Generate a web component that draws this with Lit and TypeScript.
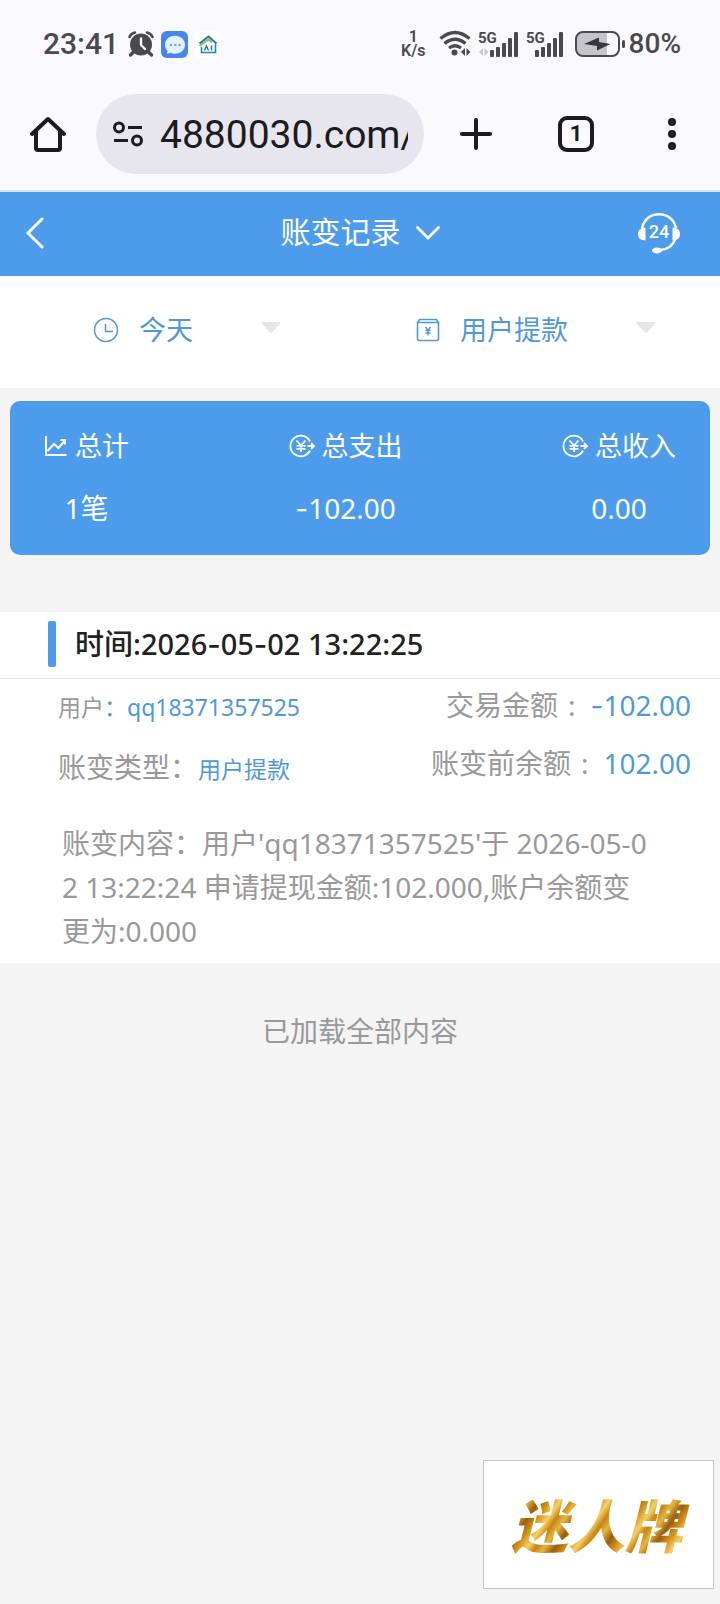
import { LitElement, html, css, svg } from "lit";
import { customElement } from "lit/decorators.js";

const base = css`
  :host {
    display: block;
  }
  * {
    box-sizing: border-box;
  }
  button,
  input,
  select {
    font: inherit;
    color: inherit;
    background: none;
    border: 0;
    margin: 0;
    padding: 0;
    outline: 0;
    appearance: none;
  }
  svg {
    display: block;
    flex: none;
    overflow: visible;
  }
  .dash {
    font-family: Inter, sans-serif;
    line-height: 1;
  }
`;

/* Figures use a wider dash than the text face offers. */
const dashed = (text: string) =>
  text.split(/(-)/).map((part) => (part === "-" ? html`<span class="dash">-</span>` : part));

@customElement("status-bar")
class StatusBar extends LitElement {
  static styles = [
    base,
    css`
      .bar {
        display: flex;
        align-items: center;
        justify-content: space-between;
        height: 88px;
        padding: 0 39px 0 43px;
        color: #4a494e;
        font-weight: 500;
      }
      .side {
        display: flex;
        align-items: center;
        gap: 7px;
      }
      .time {
        font-size: 30px;
        line-height: 32px;
        margin-right: 2px;
      }
      .speed {
        display: flex;
        flex-direction: column;
        align-items: center;
        font-size: 16px;
        line-height: 14px;
        font-weight: 600;
        margin-right: 6px;
      }
      .battery {
        display: flex;
        align-items: center;
        gap: 4px;
        font-size: 28px;
        line-height: 32px;
        margin-left: 4px;
      }
      .net {
        font-size: 15px;
        font-weight: 700;
        fill: #4a494e;
      }
    `,
  ];

  private bars(x: number) {
    return [7, 10, 14, 19, 25].map(
      (h, i) => svg`<rect x=${x + i * 6} y=${26 - h} width="4" height=${h} rx="1" fill="#4a494e" />`,
    );
  }

  render() {
    return html`
      <div class="bar">
        <div class="side">
          <span class="time">23:41</span>
          <svg width="26" height="26" viewBox="0 0 26 26" fill="none" stroke="#4a494e">
            <circle cx="13" cy="13.500" r="11" fill="#4a494e" stroke="none" />
            <path d="M1.500 6A8 8 0 0 1 7 1.500M19 1.500A8 8 0 0 1 24.500 6" stroke-width="2.600" stroke-linecap="round" />
            <path d="M5.500 21l-3 3M20.500 21l3 3" stroke-width="3.400" stroke-linecap="round" />
            <path d="M13 7.500v6.500l4 4" stroke="#faf9ff" stroke-width="2.400" stroke-linecap="round" />
          </svg>
          <svg width="27" height="27" viewBox="0 0 27 27">
            <rect width="27" height="27" rx="6" fill="#4885ea" />
            <path d="M14 4.800c5.800 0 10 3.900 10 8.900s-4.200 9-10 9c-1.700 0-3.200-.3-4.500-.9L5.800 23l.8-3C5 18.400 4 16.200 4 13.700c0-5 4.200-8.900 10-8.900z" fill="#e2f3fd" />
            <g fill="#86a8d8"><circle cx="10" cy="14" r="1.300" /><circle cx="14.300" cy="14" r="1.300" /><circle cx="18.600" cy="14" r="1.300" /></g>
          </svg>
          <svg width="26" height="27" viewBox="0 0 26 27" fill="none">
            <rect width="26" height="27" rx="6" fill="#fff" />
            <path d="M4.500 12.500l9-7 8 7" stroke="#2379a8" stroke-width="2" />
            <path d="M4.500 15l9-6.500 3.500 2.700" stroke="#8cc152" stroke-width="2" />
            <path d="M6.500 16v5.500h14V13" stroke="#27889c" stroke-width="1.600" />
            <path d="M9.500 19.500l2-4.500 2 4.500M16.500 14.500v5" stroke="#2379a8" stroke-width="1.500" />
          </svg>
        </div>
        <div class="side">
          <span class="speed"><span>1</span><span>K/s</span></span>
          <svg width="32" height="26" viewBox="0 0 32 26" fill="none" stroke="#4a494e" stroke-width="3.200">
            <path d="M1.500 7.500Q16-4.500 30.500 7.500" />
            <path d="M5.500 12.500Q16 4 26.500 12.500" />
            <path d="M10 17Q16 12.500 22 17" />
            <circle cx="15.500" cy="21.500" r="3" fill="#4a494e" stroke="none" />
            <path d="M26 17v8l-4-4zM27.500 17v8l4-4z" fill="#4a494e" stroke="none" />
          </svg>
          <svg width="41" height="26" viewBox="0 0 41 26">
            <text class="net" x="0" y="12">5G</text>
            <path d="M5 17v8l-4-4zM6.500 17v8l4-4z" fill="#c9c8cf" />
            ${this.bars(12)}
          </svg>
          <svg width="38" height="26" viewBox="0 0 38 26">
            <text class="net" x="0" y="12">5G</text>
            ${this.bars(9)}
          </svg>
          <span class="battery">
            <svg width="50" height="26" viewBox="0 0 50 26">
              <path d="M8 2h24v22H8q-6 0-6-6V8q0-6 6-6z" fill="#c5c4cb" />
              <rect x="1" y="1" width="43" height="24" rx="7" fill="none" stroke="#4a494e" stroke-width="2" />
              <rect x="47" y="9" width="3" height="8" rx="1.500" fill="#4a494e" />
              <path d="M9 13L24 6.500v4.500l11.500 2L22 19.500V15z" fill="#38373b" />
            </svg>
            <span>80%</span>
          </span>
        </div>
      </div>
    `;
  }
}

@customElement("browser-bar")
class BrowserBar extends LitElement {
  static styles = [
    base,
    css`
      .bar {
        display: flex;
        align-items: center;
        padding: 6px 26px 16px 28px;
        color: #1c1b20;
        border-bottom: 2px solid #d3e4f6;
      }
      .pill {
        flex: 1;
        min-width: 0;
        display: flex;
        align-items: center;
        gap: 16px;
        height: 80px;
        margin: 0 34px 0 28px;
        padding: 2px 16px 0;
        border-radius: 40px;
        background: #e7e6ef;
      }
      .url {
        flex: 1;
        min-width: 0;
        width: 0;
        height: 56px;
        font-size: 39px;
      }
      .actions {
        display: flex;
        gap: 60px;
      }
      .tabs {
        width: 36px;
        height: 36px;
        border: 4px solid #1c1b20;
        border-radius: 9px;
        font-size: 22px;
        line-height: 28px;
        font-weight: 700;
        text-align: center;
      }
    `,
  ];

  render() {
    return html`
      <div class="bar">
        <button aria-label="主页">
          <svg width="40" height="40" viewBox="0 0 40 40" fill="none" stroke="#1c1b20" stroke-width="4" stroke-linecap="round" stroke-linejoin="round">
            <path d="M4 20L20 5l16 15" />
            <path d="M8 17.500V34q0 2 2 2h20q2 0 2-2V17.500" />
          </svg>
        </button>
        <div class="pill">
          <svg width="32" height="28" viewBox="0 0 32 28" fill="none" stroke="#1c1b20" stroke-width="3">
            <circle cx="7" cy="6.500" r="4.500" />
            <path d="M16 6.500h14M2 19.500h14" />
            <circle cx="25" cy="19.500" r="4.500" />
          </svg>
          <input class="url" aria-label="网址" value="4880030.com/" />
        </div>
        <div class="actions">
          <button aria-label="新标签页">
            <svg width="40" height="36" viewBox="0 0 40 36" stroke="#1c1b20" stroke-width="4" stroke-linecap="round">
              <path d="M4 18h28M18 4v28" />
            </svg>
          </button>
          <button class="tabs" aria-label="标签页">1</button>
          <button aria-label="菜单">
            <svg width="40" height="36" viewBox="0 0 40 36" fill="#1c1b20">
              <circle cx="18" cy="6" r="4" /><circle cx="18" cy="18" r="4" /><circle cx="18" cy="30" r="4" />
            </svg>
          </button>
        </div>
      </div>
    `;
  }
}

@customElement("page-header")
class PageHeader extends LitElement {
  static styles = [
    base,
    css`
      .header {
        display: grid;
        grid-template-columns: 1fr auto 1fr;
        align-items: center;
        height: 84px;
        padding: 0 24px 2px;
        background: #4c9ceb;
        color: #fff;
      }
      .title {
        display: flex;
        align-items: center;
        gap: 15px;
      }
      .name {
        margin: 0;
        font-size: 30px;
        line-height: 40px;
        font-weight: 400;
      }
      .service {
        justify-self: end;
        margin-right: 15px;
      }
      .hours {
        font-size: 18px;
        font-weight: 500;
        fill: #fff;
      }
    `,
  ];

  render() {
    return html`
      <header class="header">
        <button aria-label="返回">
          <svg width="22" height="32" viewBox="0 0 22 32" fill="none" stroke="#fff" stroke-width="3" stroke-linecap="round">
            <path d="M18 2L4 16l14 14" />
          </svg>
        </button>
        <button class="title">
          <h1 class="name">账变记录</h1>
          <svg width="24" height="14" viewBox="0 0 24 14" fill="none" stroke="#fff" stroke-width="2.800" stroke-linecap="round">
            <path d="M1.500 1.500L12 12 22.500 1.500" />
          </svg>
        </button>
        <button class="service" aria-label="客服">
          <svg width="44" height="42" viewBox="0 0 44 42" fill="none" stroke="#fff" stroke-width="2.400">
            <path d="M5 16C7 7 14 2.200 22 2.200S37 7 39 16" />
            <path d="M38.500 26c-2 7-8 11.500-16 12" />
            <ellipse cx="20" cy="38.500" rx="5" ry="3" fill="#fff" stroke="none" />
            <path d="M8.500 15.500v13q-7.500 0-7.500-6.500t7.500-6.500zM35.500 15.500v13q7.500 0 7.500-6.500t-7.500-6.500z" fill="#fff" stroke="none" />
            <text class="hours" x="22" y="26" text-anchor="middle" stroke="none">24</text>
          </svg>
        </button>
      </header>
    `;
  }
}

@customElement("filter-row")
class FilterRow extends LitElement {
  static styles = [
    base,
    css`
      .row {
        display: flex;
        justify-content: space-between;
        height: 112px;
        padding: 34px 64px 0 93px;
        background: #fff;
        color: #5099d8;
      }
      .filter {
        display: flex;
        align-items: center;
        gap: 20px;
        height: 40px;
      }
      .date {
        flex-basis: 188px;
      }
      .kind {
        flex-basis: 240px;
      }
      .choice {
        flex: 1;
        min-width: 0;
        height: 40px;
        padding-bottom: 2px;
        font-size: 27px;
      }
      .caret {
        margin-bottom: 4px;
      }
    `,
  ];

  private caret() {
    return html`<svg class="caret" width="20" height="12" viewBox="0 0 20 12"><path d="M1 0h18q1 1 0 2l-8 8.500q-1 1-2 0L1 2Q0 1 1 0z" fill="#e6e6e6" /></svg>`;
  }

  render() {
    return html`
      <div class="row">
        <label class="filter date">
          <svg width="26" height="26" viewBox="0 0 26 26" fill="none" stroke="#5099d8" stroke-width="1.500">
            <circle cx="13" cy="13" r="11.500" />
            <path d="M12.500 7v7.500h7.500" />
          </svg>
          <select class="choice" aria-label="日期">
            <option>今天</option>
          </select>
          ${this.caret()}
        </label>
        <label class="filter kind">
          <svg width="24" height="26" viewBox="0 0 24 26" fill="none" stroke="#5099d8" stroke-width="1.600">
            <path d="M1.500 6l2-3.500h17l2 3.500M1.500 5.500h21v16q0 2-2 2h-17q-2 0-2-2z" />
            <path d="M9.500 10l2.500 3.500 2.500-3.500M12 13v5.500M9.500 13.500h5M9.500 16h5" stroke-width="1.400" />
          </svg>
          <select class="choice" aria-label="类型">
            <option>用户提款</option>
          </select>
          ${this.caret()}
        </label>
      </div>
    `;
  }
}

@customElement("summary-card")
class SummaryCard extends LitElement {
  static styles = [
    base,
    css`
      .card {
        display: flex;
        justify-content: space-between;
        margin: 13px 10px 57px;
        padding: 25px 34px 27px;
        border-radius: 10px;
        background: #4c9ceb;
        color: #fff;
      }
      .total {
        display: flex;
        flex-direction: column;
        align-items: center;
        gap: 22px;
      }
      .label {
        display: flex;
        align-items: center;
        gap: 7px;
        font-size: 27px;
        line-height: 40px;
      }
      .value {
        font-size: 28px;
        line-height: 40px;
      }
    `,
  ];

  private chartIcon() {
    return html`<svg width="24" height="24" viewBox="0 0 24 24" fill="none" stroke="#fff" stroke-width="2">
      <path d="M2 2v19h20.500" />
      <path d="M3.500 17l6.500-7 4.500 4L21 6.500M16.500 6H21v4.500" />
    </svg>`;
  }

  private yuanIcon() {
    return html`<svg width="26" height="24" viewBox="0 0 26 24" fill="none" stroke="#fff" stroke-width="1.800">
      <path d="M21 7.500A10.300 10.300 0 1 0 21 16.500" />
      <path d="M7.500 6.500L12 11.500l4.500-5M12 11.500V18M7.500 11.800h9M7.500 14.800h9" />
      <path d="M18.500 12h6.500M22 9l3 3-3 3" />
    </svg>`;
  }

  render() {
    const totals = [
      { label: "总计", value: "1笔", icon: this.chartIcon() },
      { label: "总支出", value: "-102.00", icon: this.yuanIcon() },
      { label: "总收入", value: "0.00", icon: this.yuanIcon() },
    ];
    return html`
      <section class="card">
        ${totals.map(
          (t) => html`<div class="total">
            <div class="label">${t.icon}<span>${t.label}</span></div>
            <div class="value">${dashed(t.value)}</div>
          </div>`,
        )}
      </section>
    `;
  }
}

@customElement("record-item")
class RecordItem extends LitElement {
  static styles = [
    base,
    css`
      .record {
        background: #fff;
        color: #999;
        font-size: 28px;
      }
      .head {
        display: flex;
        align-items: center;
        gap: 19px;
        height: 67px;
        padding: 0 48px 2px;
        border-bottom: 1px solid #e4e4e4;
      }
      .mark {
        width: 8px;
        height: 46px;
        border-radius: 2px;
        background: #4c9ceb;
      }
      .time {
        margin: 0;
        color: #222;
        font-size: 29px;
        line-height: 40px;
        font-weight: 500;
      }
      .fields {
        display: flex;
        justify-content: space-between;
        padding: 6px 29px 0 58px;
      }
      .col {
        display: flex;
        flex-direction: column;
        gap: 20px;
        line-height: 40px;
      }
      .parties {
        padding-top: 2px;
      }
      .amounts {
        gap: 18px;
        text-align: right;
      }
      .small {
        font-size: 23px;
      }
      .blue {
        color: #5099d8;
      }
      .colon {
        margin: 0 15px 0 10px;
      }
      .detail {
        margin: 0;
        padding: 32px 70px 10px 62px;
        line-height: 44px;
        word-break: break-all;
      }
    `,
  ];

  render() {
    return html`
      <article class="record">
        <div class="head">
          <span class="mark"></span>
          <h2 class="time">时间:${dashed("2026-05-02 13:22:25")}</h2>
        </div>
        <div class="fields">
          <div class="col parties">
            <div class="small">用户<span class="blue">：qq18371357525</span></div>
            <div>账变类型：<span class="small blue">用户提款</span></div>
          </div>
          <div class="col amounts">
            <div>交易金额<span class="colon">:</span><span class="blue">${dashed("-102.00")}</span></div>
            <div>账变前余额<span class="colon">:</span><span class="blue">102.00</span></div>
          </div>
        </div>
        <p class="detail">账变内容：用户'qq18371357525'于 2026-05-02 13:22:24 申请提现金额:102.000,账户余额变更为:0.000</p>
      </article>
    `;
  }
}

@customElement("app-root")
class AppRoot extends LitElement {
  static styles = [
    base,
    css`
      :host {
        min-height: 100vh;
        background: #f4f4f4;
        font-family: Roboto, "Noto Sans CJK SC", sans-serif;
      }
      .chrome {
        background: #faf9ff;
      }
      .page {
        font-family: "Noto Sans", "Noto Sans CJK SC", sans-serif;
      }
      .end {
        margin: 0;
        padding: 48px 0;
        color: #999;
        font-size: 28px;
        line-height: 40px;
        text-align: center;
      }
      .promo {
        position: fixed;
        right: 6px;
        bottom: 15px;
        display: flex;
        align-items: center;
        justify-content: center;
        width: 231px;
        height: 129px;
        padding-bottom: 4px;
        border: 1px solid #c6c6c6;
        background: #fff;
        text-decoration: none;
      }
      .brand {
        padding: 0 12px 0 8px;
        font-family: "Noto Sans CJK SC", sans-serif;
        font-size: 57px;
        line-height: 80px;
        font-weight: 900;
        font-style: italic;
        color: transparent;
        background: repeating-linear-gradient(125deg, #9a5d0c 0, #d8951d 9px, #f3d06a 17px, #c98511 24px, #e8b540 31px, #9a5d0c 40px);
        background-clip: text;
        -webkit-background-clip: text;
      }
    `,
  ];

  render() {
    return html`
      <div class="chrome">
        <status-bar></status-bar>
        <browser-bar></browser-bar>
      </div>
      <page-header></page-header>
      <main class="page">
        <filter-row></filter-row>
        <summary-card></summary-card>
        <record-item></record-item>
        <p class="end">已加载全部内容</p>
      </main>
      <a class="promo" href="#"><span class="brand">迷人牌</span></a>
    `;
  }
}
